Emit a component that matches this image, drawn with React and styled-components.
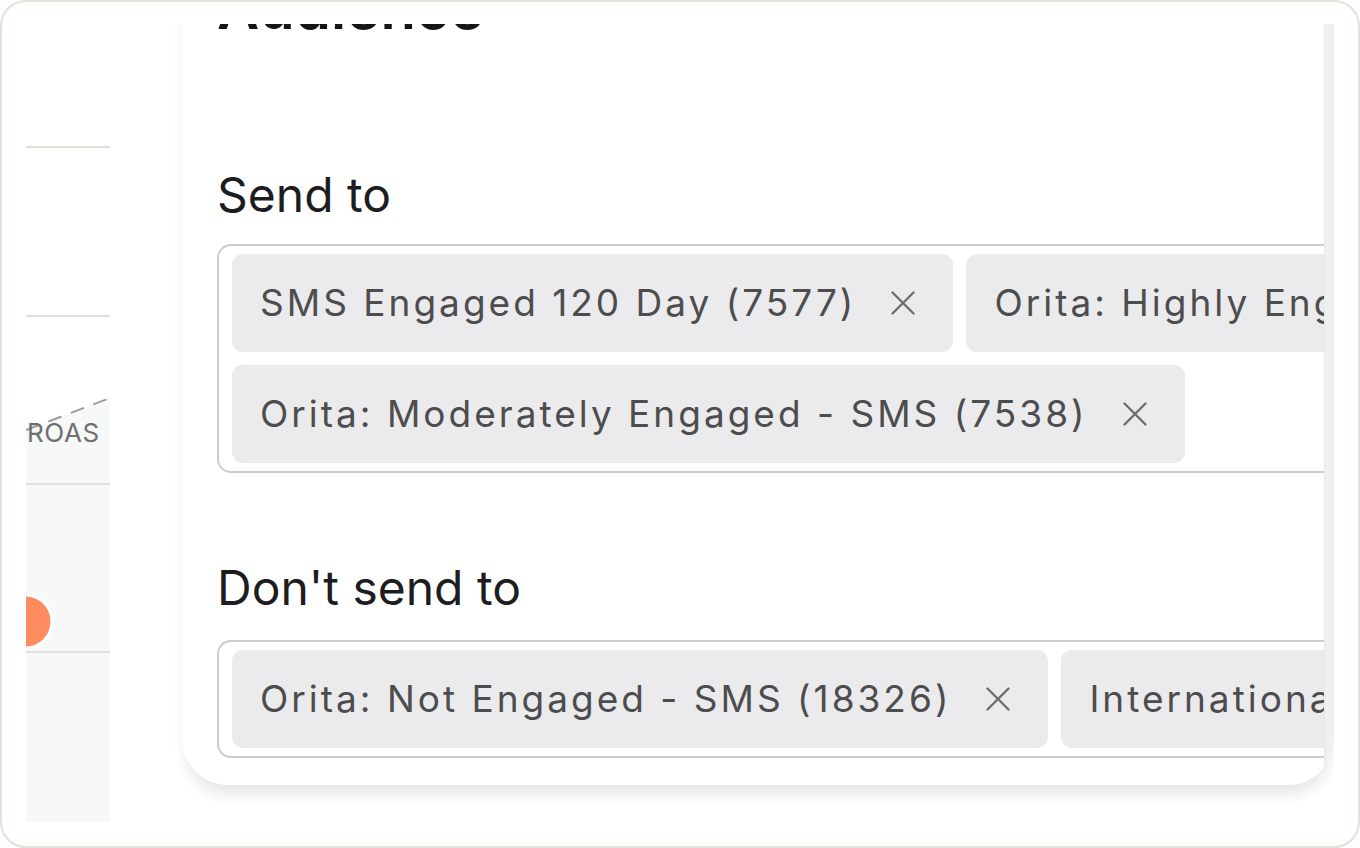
import styled, { createGlobalStyle } from "styled-components";

const GlobalStyle = createGlobalStyle`
  html, body {
    margin: 0;
    padding: 0;
    background: #ffffff;
  }
  * {
    box-sizing: border-box;
  }
`;

const sendTo = [
  "SMS Engaged 120 Day (7577)",
  "Orita: Highly Engaged - SMS (5241)",
  "Orita: Moderately Engaged - SMS (7538)",
];

const dontSendTo = [
  "Orita: Not Engaged - SMS (18326)",
  "International Subscribers (2207)",
];

const Frame = styled.div`
  width: 1360px;
  height: 848px;
  padding: 22px 24px 24px 24px;
  border: 2px solid #e4e0d8;
  border-radius: 26px;
  background: #ffffff;
  font-family: Inter, "Noto Sans", sans-serif;
`;

const Viewport = styled.div`
  display: flex;
  width: 100%;
  height: 100%;
  overflow: hidden;
`;

const ChartStrip = styled.div`
  position: relative;
  flex-shrink: 0;
  width: 84px;
  height: 100%;
  overflow: hidden;
`;

const ChartSvg = styled.svg`
  display: block;
`;

const AxisLabel = styled.span`
  position: absolute;
  left: 1px;
  top: 394px;
  font-size: 26px;
  line-height: 30px;
  color: #6f6f6f;
  letter-spacing: 0.6px;
  white-space: nowrap;
`;

const Card = styled.section`
  display: flex;
  flex: 1;
  min-width: 0;
  align-self: flex-end;
  margin: 0 0 37px 72px;
  background: #ffffff;
  border-radius: 0 0 46px 46px;
  box-shadow: 0 13px 14px -4px rgba(40, 30, 20, 0.11);
  overflow: hidden;
`;

const Content = styled.div`
  flex: 1;
  min-width: 0;
  overflow: hidden;
  padding: 0 0 27px 35px;
`;

const ScrollTrack = styled.div`
  width: 10px;
  flex-shrink: 0;
  background: #eff1f1;
  border-left: 1px solid #e7e9e9;
`;

const Heading = styled.h2`
  margin: 0 0 124px 0;
  font-size: 58px;
  line-height: 70px;
  font-weight: 600;
  color: #151515;
`;

const Label = styled.div`
  margin: ${(p) => (p.$first ? "0" : "87px")} 0 ${(p) => (p.$first ? "21px" : "24px")} 0;
  font-size: 48px;
  line-height: 56px;
  font-weight: 400;
  color: #1d1d1f;
`;

const TagBox = styled.div`
  display: flex;
  flex-wrap: wrap;
  gap: 13px 13px;
  width: 1900px;
  padding: 8px 13px;
  border: 2px solid #cdcdcd;
  border-radius: 14px;
`;

const Tag = styled.span`
  display: inline-flex;
  align-items: center;
  flex-shrink: 0;
  gap: 35px;
  height: 98px;
  padding: 0 38px 0 28px;
  background: #ebebed;
  border-radius: 11px;
  font-size: 37px;
  line-height: 44px;
  letter-spacing: 3px;
  color: #4d4d4d;
  white-space: nowrap;
`;

function CloseIcon() {
  return (
    <svg width="24" height="24" viewBox="0 0 24 24" aria-hidden="true">
      <path
        d="M1.5 1.5 L22.5 22.5 M22.5 1.5 L1.5 22.5"
        stroke="#6e6e6e"
        strokeWidth="2.4"
        strokeLinecap="round"
        fill="none"
      />
    </svg>
  );
}

function Chart() {
  const grid = [123, 292, 460, 628];
  return (
    <ChartStrip>
      <ChartSvg width="84" height="798" viewBox="0 0 84 798">
        <polygon points="0,406 84,374 84,798 0,798" fill="#f7f8f8" />
        {grid.map((y) => (
          <line key={y} x1="0" x2="84" y1={y} y2={y} stroke="#e2dfdb" strokeWidth="2" />
        ))}
        <line
          x1="0"
          y1="406"
          x2="84"
          y2="374"
          stroke="#9c9c9c"
          strokeWidth="2"
          strokeDasharray="14 10"
        />
        <circle cx="-0.5" cy="597.5" r="26.5" fill="#fd8c61" stroke="#ffffff" strokeWidth="3" />
      </ChartSvg>
      <AxisLabel>ROAS</AxisLabel>
    </ChartStrip>
  );
}

function TagList({ items }) {
  return (
    <TagBox>
      {items.map((item) => (
        <Tag key={item}>
          {item}
          <CloseIcon />
        </Tag>
      ))}
    </TagBox>
  );
}

export default function App() {
  return (
    <>
      <GlobalStyle />
      <Frame>
        <Viewport>
          <Chart />
          <Card>
            <Content>
              <Heading>Audience</Heading>
              <Label $first>Send to</Label>
              <TagList items={sendTo} />
              <Label>Don't send to</Label>
              <TagList items={dontSendTo} />
            </Content>
            <ScrollTrack />
          </Card>
        </Viewport>
      </Frame>
    </>
  );
}
